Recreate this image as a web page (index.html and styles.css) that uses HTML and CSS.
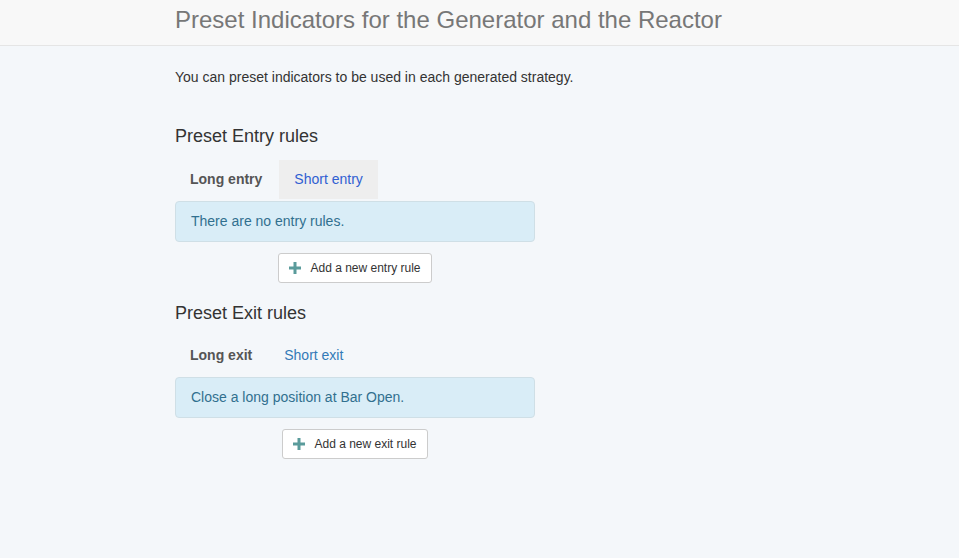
FILE: index.html
```html
<!DOCTYPE html>
<html>
<head>
<meta charset="utf-8">
<link rel="stylesheet" href="styles.css">
</head>
<body>
<header class="topbar">
  <div class="container">
    <h1 class="title">Preset Indicators for the Generator and the Reactor</h1>
  </div>
</header>
<main class="container">
  <p class="intro">You can preset indicators to be used in each generated strategy.</p>

  <section class="rules rules-entry">
    <h4 class="rules-title">Preset Entry rules</h4>
    <ul class="tabs">
      <li class="tab tab-active">Long entry</li>
      <li class="tab tab-hover">Short entry</li>
    </ul>
    <div class="alert">There are no entry rules.</div>
    <div class="btn-row">
      <button class="btn"><svg class="plus" viewBox="0 0 12 12" width="12" height="12"><path d="M4.5 0h3v4.5H12v3H7.5V12h-3V7.5H0v-3h4.5z" fill="#5a9b9b"/></svg>Add a new entry rule</button>
    </div>
  </section>

  <section class="rules rules-exit">
    <h4 class="rules-title">Preset Exit rules</h4>
    <ul class="tabs">
      <li class="tab tab-active">Long exit</li>
      <li class="tab tab-link">Short exit</li>
    </ul>
    <div class="alert">Close a long position at Bar Open.</div>
    <div class="btn-row">
      <button class="btn"><svg class="plus" viewBox="0 0 12 12" width="12" height="12"><path d="M4.5 0h3v4.5H12v3H7.5V12h-3V7.5H0v-3h4.5z" fill="#5a9b9b"/></svg>Add a new exit rule</button>
    </div>
  </section>
</main>
</body>
</html>
```

FILE: styles.css
```css
html, body {
  margin: 0;
  padding: 0;
}
body {
  background: #f4f7fa;
  font-family: "Liberation Sans", Arial, sans-serif;
  font-size: 14px;
  line-height: 20px;
  color: #333;
  min-height: 558px;
}
.container {
  padding-left: 175px;
}
.topbar {
  background: #f8f8f8;
  border-bottom: 1px solid #e5e5e5;
  height: 46px;
  box-sizing: border-box;
}
.title {
  margin: 0;
  padding-top: 5px;
  font-size: 24px;
  line-height: 30px;
  font-weight: normal;
  color: #777;
}
.intro {
  margin: 21px 0 0 0;
  line-height: 20px;
}
.rules {
  width: 360px;
}
.rules-entry {
  margin-top: 38px;
}
.rules-exit {
  margin-top: 19px;
}
.rules-title {
  margin: 0;
  font-size: 18px;
  line-height: 22px;
  font-weight: normal;
  color: #333;
}
.tabs {
  list-style: none;
  margin: 13px 0 0 0;
  padding: 0;
  display: flex;
}
.rules-exit .tabs {
  margin-top: 12px;
}
.tab {
  padding: 10px 15px 10px;
  line-height: 19px;
  margin-right: 2px;
}
.tab-active {
  font-weight: bold;
  color: #555;
}
.tab-hover {
  background: #eeeeee;
  color: #3060d2;
}
.tab-link {
  color: #337ab7;
}
.alert {
  margin-top: 2px;
  padding: 10px 15px;
  background: #d9edf7;
  border: 1px solid #cfdfe6;
  border-radius: 4px;
  color: #31708f;
  line-height: 19px;
}
.btn-row {
  display: flex;
  justify-content: center;
  margin-top: 11px;
}
.btn {
  display: inline-flex;
  align-items: center;
  height: 30px;
  box-sizing: border-box;
  padding: 0 10px;
  background: #fff;
  border: 1px solid #ccc;
  border-radius: 3px;
  font-family: "Liberation Sans", Arial, sans-serif;
  font-size: 12px;
  color: #333;
}
.plus {
  margin-right: 9px;
}
```
